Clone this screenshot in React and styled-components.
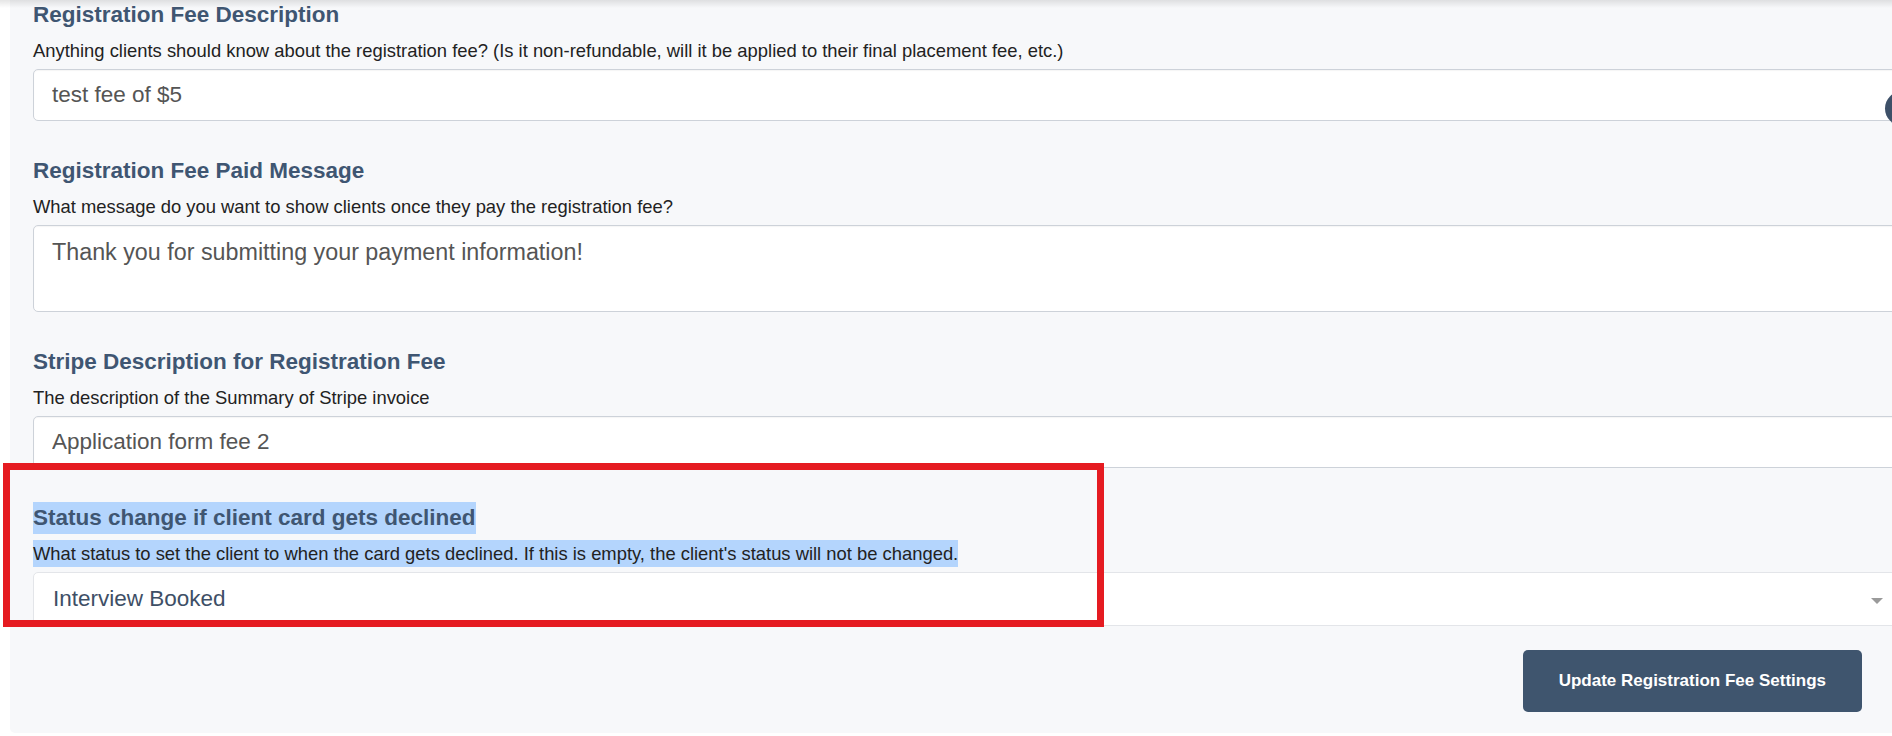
import React from "react";
import styled, { createGlobalStyle } from "styled-components";

const GlobalStyle = createGlobalStyle`
  html, body {
    margin: 0;
    padding: 0;
    background: #ffffff;
    overflow: hidden;
  }
  body {
    font-family: "Liberation Sans", Arial, Helvetica, sans-serif;
    color: #222222;
  }
  * { box-sizing: border-box; }
`;

const Page = styled.div`
  position: relative;
  width: 1892px;
  height: 736px;
  overflow: hidden;
`;

const TopShadow = styled.div`
  position: absolute;
  left: 0;
  top: 0;
  width: 100%;
  height: 8px;
  background: linear-gradient(rgba(0, 0, 0, 0.1), rgba(0, 0, 0, 0));
  pointer-events: none;
  z-index: 5;
`;

const Panel = styled.div`
  margin: -1.5px 0 0 10px;
  padding: 0 30px 21px 23px;
  background: #f7f8fa;
  border-bottom-left-radius: 5px;
`;

const Group = styled.div`
  & + & {
    margin-top: 33.5px;
  }
`;

const Heading = styled.h3`
  margin: 0 0 6px 0;
  font-size: 22.5px;
  line-height: 32px;
  font-weight: 700;
  color: #3f5672;
`;

const Help = styled.p`
  margin: 0 0 5.5px 0;
  font-size: 18.4px;
  line-height: 27px;
  color: #222222;
`;

const Highlight = styled.span`
  display: inline-block;
  background: #b4d5fd;
`;

const controlBase = `
  display: block;
  width: calc(100% + 40px);
  border: 1px solid #cdd2d9;
  border-radius: 5px;
  background: #ffffff;
  font-family: "Liberation Sans", Arial, Helvetica, sans-serif;
  font-size: 22.5px;
  color: #555555;
  box-shadow: inset 0 1px 1px rgba(0, 0, 0, 0.04);
  outline: none;
`;

const TextInput = styled.input`
  ${controlBase}
  height: 52px;
  padding: 0 18px;
`;

const TextArea = styled.textarea`
  ${controlBase}
  height: 87px;
  padding: 9.5px 18px;
  font-size: 23.3px;
  line-height: 32px;
  resize: none;
`;

const SelectBox = styled.div`
  display: flex;
  align-items: center;
  justify-content: space-between;
  width: calc(100% + 40px);
  height: 54px;
  padding: 0 18px 0 19px;
  background: #ffffff;
  border: 1px solid #e3e5e9;
  border-radius: 5px;
  font-size: 22.5px;
  color: #3e4f66;
`;

const Caret = styled.span`
  width: 0;
  height: 0;
  margin-top: 3px;
  border-left: 6.5px solid transparent;
  border-right: 6.5px solid transparent;
  border-top: 6.5px solid #9a9a9a;
`;

const Actions = styled.div`
  display: flex;
  justify-content: flex-end;
  margin-top: 24px;
`;

const Button = styled.button`
  height: 62px;
  padding: 0 36px;
  border: none;
  border-radius: 5px;
  background: #3f556e;
  color: #ffffff;
  font-family: "Liberation Sans", Arial, Helvetica, sans-serif;
  font-size: 17px;
  font-weight: 700;
  cursor: pointer;
`;

const Annotation = styled.div`
  position: absolute;
  left: 3px;
  top: 463px;
  width: 1101px;
  height: 164px;
  border: 7px solid #e51b21;
  pointer-events: none;
  z-index: 4;
`;

const FloatingDot = styled.div`
  position: absolute;
  left: 1885px;
  top: 91px;
  width: 35px;
  height: 35px;
  border-radius: 50%;
  background: #3d5068;
  z-index: 3;
`;

export default function App() {
  return (
    <>
      <GlobalStyle />
      <Page>
        <TopShadow />
        <Panel>
          <Group>
            <Heading>Registration Fee Description</Heading>
            <Help>
              Anything clients should know about the registration fee? (Is it
              non-refundable, will it be applied to their final placement fee,
              etc.)
            </Help>
            <TextInput readOnly value="test fee of $5" />
          </Group>
          <Group>
            <Heading>Registration Fee Paid Message</Heading>
            <Help>
              What message do you want to show clients once they pay the
              registration fee?
            </Help>
            <TextArea
              readOnly
              value="Thank you for submitting your payment information!"
            />
          </Group>
          <Group>
            <Heading>Stripe Description for Registration Fee</Heading>
            <Help>The description of the Summary of Stripe invoice</Help>
            <TextInput readOnly value="Application form fee 2" />
          </Group>
          <Group>
            <Heading>
              <Highlight>Status change if client card gets declined</Highlight>
            </Heading>
            <Help>
              <Highlight>
                What status to set the client to when the card gets declined.
                If this is empty, the client's status will not be changed.
              </Highlight>
            </Help>
            <SelectBox>
              <span>Interview Booked</span>
              <Caret />
            </SelectBox>
          </Group>
          <Actions>
            <Button type="button">Update Registration Fee Settings</Button>
          </Actions>
        </Panel>
        <FloatingDot />
        <Annotation />
      </Page>
    </>
  );
}
